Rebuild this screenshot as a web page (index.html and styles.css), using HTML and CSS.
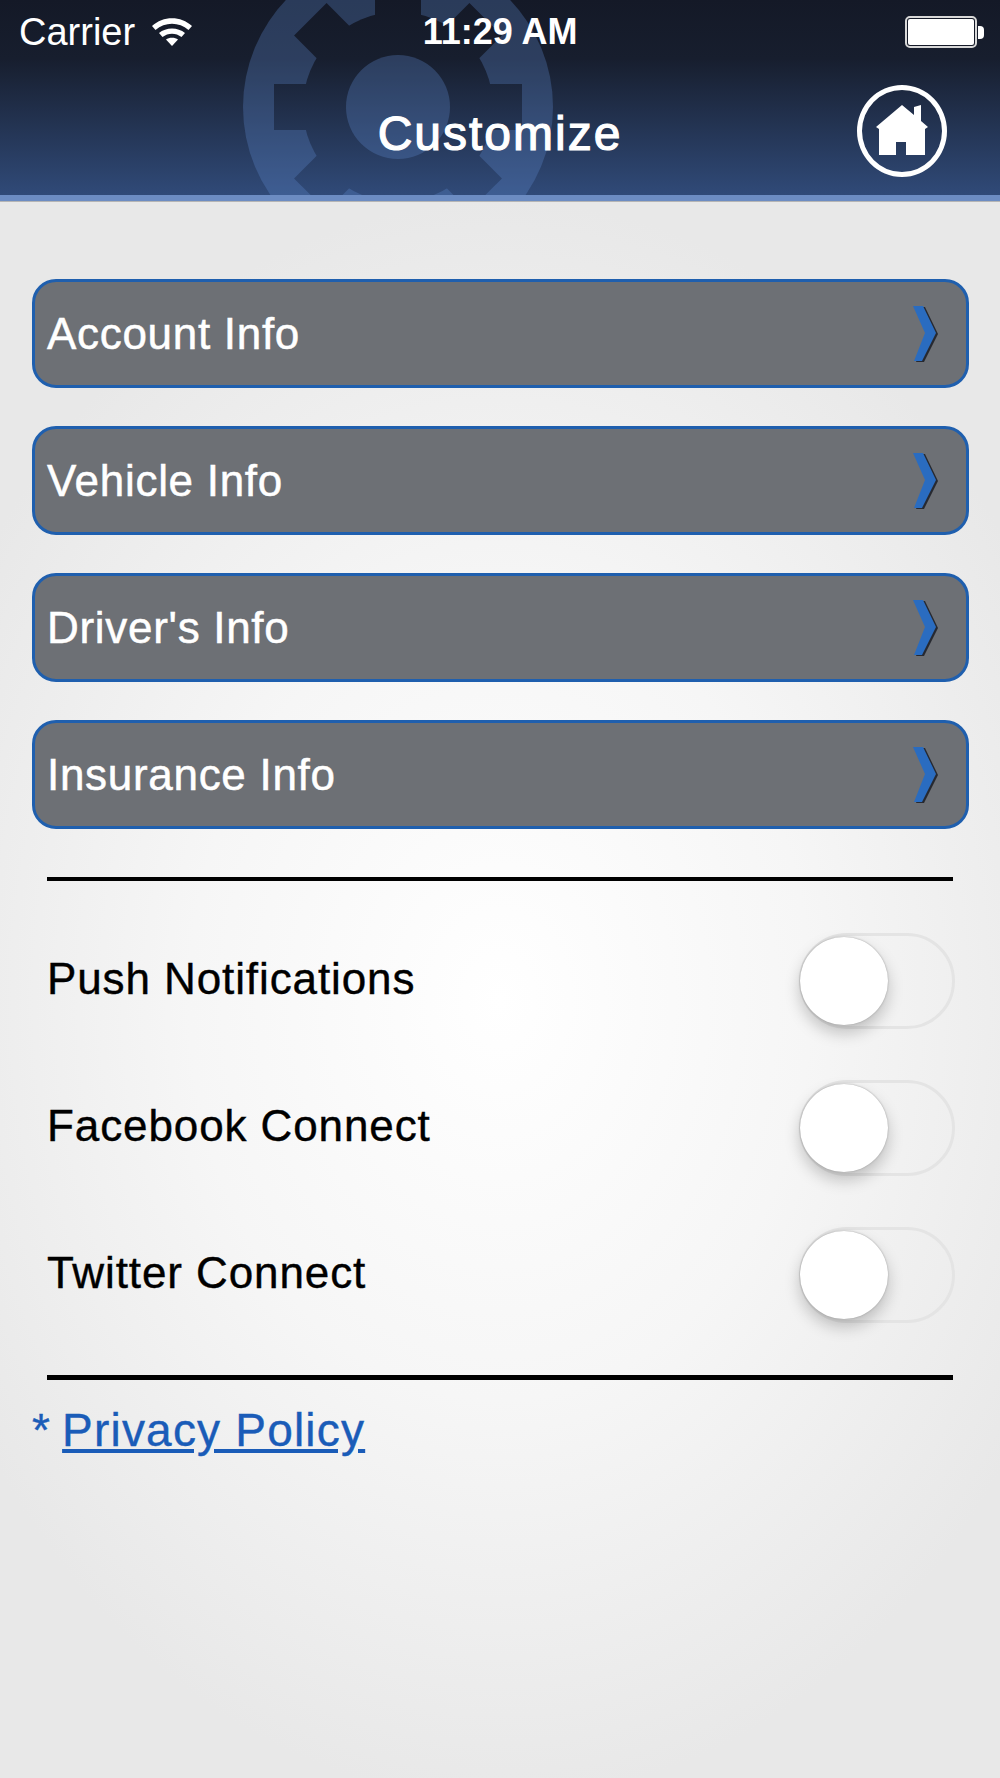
FILE: index.html
```html
<html>
<head>
    <link rel="stylesheet" href="styles.css">
</head>
<body>
    <div class="nav">
        <svg class="gear" width="320" height="320" viewBox="-160 -160 320 320">
            <defs>
                <mask id="gearCut">
                    <rect x="-160" y="-160" width="320" height="320" fill="#fff"/>
                    <g fill="#000">
                        <circle r="95"/>
                        <rect x="-23" y="-124" width="46" height="50"/>
                        <rect x="-23" y="-124" width="46" height="50" transform="rotate(45)"/>
                        <rect x="-23" y="-124" width="46" height="50" transform="rotate(90)"/>
                        <rect x="-23" y="-124" width="46" height="50" transform="rotate(135)"/>
                        <rect x="-23" y="-124" width="46" height="50" transform="rotate(180)"/>
                        <rect x="-23" y="-124" width="46" height="50" transform="rotate(225)"/>
                        <rect x="-23" y="-124" width="46" height="50" transform="rotate(270)"/>
                        <rect x="-23" y="-124" width="46" height="50" transform="rotate(315)"/>
                    </g>
                    <circle r="52" fill="#fff"/>
                </mask>
            </defs>
            <circle r="155" fill="#5f8ad0" fill-opacity="0.3" mask="url(#gearCut)"/>
        </svg>

        <div class="statusBar">
            <div class="statusLeft">
                <span class="carrier">Carrier</span>
                <svg class="wifi" width="40" height="28" viewBox="0 0 40 28">
                    <path d="M0 8 C 11 -2.5, 29 -2.5, 40 8 L 36.500 12 C 27 3.500, 13 3.500, 3.500 12 Z" fill="#fff"/>
                    <path d="M7 15 C 14 9, 26 9, 33 15 L 29.500 19 C 24 14.500, 16 14.500, 10.500 19 Z" fill="#fff"/>
                    <path d="M14 21.500 C 17 19, 23 19, 26 21.500 L 20 28 Z" fill="#fff"/>
                </svg>
            </div>
            <span class="clock">11:29 AM</span>
            <div class="battery">
                <div class="batteryBody"></div>
                <div class="batteryTip"></div>
            </div>
        </div>

        <div class="titleBar">
            <span class="title">Customize</span>
            <div class="homeButton">
                <svg width="52" height="51" viewBox="0 0 52 51">
                    <path d="M26 1 L38 11 L38 3 L45 1 L45 17 L52 23 L49 25 L49 51 L30 51 L30 38 L20 38 L20 51 L3 51 L3 25 L0 23 Z" fill="#fff"/>
                </svg>
            </div>
        </div>
    </div>

    <div class="content">
        <div class="menu">
            <div class="menuItem">
                <span>Account Info</span>
                <svg class="chevron" width="26" height="58" viewBox="0 0 26 58"><use href="#chev"/></svg>
            </div>
            <div class="menuItem">
                <span>Vehicle Info</span>
                <svg class="chevron" width="26" height="58" viewBox="0 0 26 58"><use href="#chev"/></svg>
            </div>
            <div class="menuItem">
                <span>Driver's Info</span>
                <svg class="chevron" width="26" height="58" viewBox="0 0 26 58"><use href="#chev"/></svg>
            </div>
            <div class="menuItem">
                <span>Insurance Info</span>
                <svg class="chevron" width="26" height="58" viewBox="0 0 26 58"><use href="#chev"/></svg>
            </div>
        </div>

        <div class="settings">
            <div class="settingRow">
                <span>Push Notifications</span>
                <div class="toggle"><div class="knob"></div></div>
            </div>
            <div class="settingRow">
                <span>Facebook Connect</span>
                <div class="toggle"><div class="knob"></div></div>
            </div>
            <div class="settingRow">
                <span>Twitter Connect</span>
                <div class="toggle"><div class="knob"></div></div>
            </div>
        </div>

        <div class="privacy">* <a href="#">Privacy Policy</a></div>
    </div>

    <svg width="0" height="0" class="defs">
        <defs>
            <g id="chev">
                <path d="M3 2 L12 2 L25 29 L11 57 L3 57 L15 29 Z" fill="#15181f" opacity="0.8"/>
                <path d="M0 1 L10 1 L23 28 L9 56 L1 56 L12 28 Z" fill="#2a6cc0"/>
            </g>
        </defs>
    </svg>
</body>
</html>
```

FILE: styles.css
```css
html, body {
    margin: 0;
    padding: 0;
}

body {
    width: 1000px;
    height: 1778px;
    overflow: hidden;
    font-family: "Liberation Sans", Arial, sans-serif;
    background: radial-gradient(ellipse 620px 800px at 500px 1000px, #ffffff 0%, #f6f6f6 50%, #e8e8e8 100%);
}

.nav {
    position: relative;
    height: 195px;
    overflow: hidden;
    background: linear-gradient(to bottom, #141927 0%, #171e2e 30%, #304a78 100%);
    border-bottom: 6px solid #6c8cc2;
    box-shadow: 0 1px 0 #b5b5b5;
}

.gear {
    position: absolute;
    left: 238px;
    top: -53px;
}

.statusBar {
    position: relative;
    height: 64px;
    display: flex;
    align-items: center;
    justify-content: space-between;
    padding: 0 16px 0 19px;
    color: #fff;
}

.statusLeft {
    display: flex;
    align-items: center;
    gap: 17px;
    width: 300px;
    font-size: 38px;
}

.clock {
    font-size: 36px;
    font-weight: bold;
    margin-left: -3px;
}

.battery {
    display: flex;
    align-items: center;
    width: 300px;
    justify-content: flex-end;
}

.batteryBody {
    box-sizing: border-box;
    width: 70px;
    height: 30px;
    background: #fff;
    border: 2px solid #151a28;
    outline: 2px solid #d8d8d8;
    outline-offset: -1px;
    border-radius: 4px;
}

.batteryTip {
    width: 6px;
    height: 13px;
    margin-left: 2px;
    background: #fff;
    border-radius: 0 4px 4px 0;
}

.titleBar {
    position: relative;
    height: 130px;
}

.title {
    display: block;
    padding-top: 15px;
    text-align: center;
    color: #fff;
    font-size: 48px;
    letter-spacing: 2px;
    -webkit-text-stroke: 1.2px #fff;
    line-height: 110px;
}

.homeButton {
    position: absolute;
    top: 21px;
    left: 857px;
    width: 80px;
    height: 82px;
    border: 5px solid #fff;
    border-radius: 50%;
    display: flex;
    align-items: center;
    justify-content: center;
}

.homeButton svg {
    margin-bottom: 3px;
}

.content {
    padding: 78px 31px 0 32px;
}

.menu {
    display: flex;
    flex-direction: column;
    gap: 38px;
}

.menuItem {
    box-sizing: border-box;
    height: 109px;
    display: flex;
    align-items: center;
    justify-content: space-between;
    padding: 0 27px 0 12px;
    background: #6d7075;
    border: 3px solid #1f5fae;
    border-radius: 24px;
    color: #fff;
    font-size: 44px;
    letter-spacing: 0.7px;
    -webkit-text-stroke: 0.5px #fff;
}

.settings {
    margin: 48px 16px 0 15px;
    padding: 26px 0 27px;
    border-top: 4px solid #000;
    border-bottom: 5px solid #000;
}

.settingRow {
    height: 147px;
    display: flex;
    align-items: center;
    justify-content: space-between;
    margin-right: -2px;
    color: #000;
    font-size: 44px;
    letter-spacing: 0.9px;
    -webkit-text-stroke: 0.4px #000;
}

.settingRow span {
    margin-bottom: 4px;
}

.toggle {
    position: relative;
    box-sizing: border-box;
    width: 156px;
    height: 96px;
    border: 3px solid #e4e4e4;
    border-radius: 48px;
}

.knob {
    position: absolute;
    left: -2px;
    top: 1px;
    width: 88px;
    height: 88px;
    background: #fff;
    border-radius: 50%;
    box-shadow: 0 0 2px #999, 0 8px 16px rgba(0, 0, 0, 0.22);
}

.privacy {
    margin-top: 23px;
    color: #1a5cb8;
    font-size: 46px;
    letter-spacing: 1.2px;
    -webkit-text-stroke: 0.4px #1a5cb8;
}

.privacy a {
    margin-left: -3px;
    color: #1a5cb8;
}

.defs {
    position: absolute;
}
```
